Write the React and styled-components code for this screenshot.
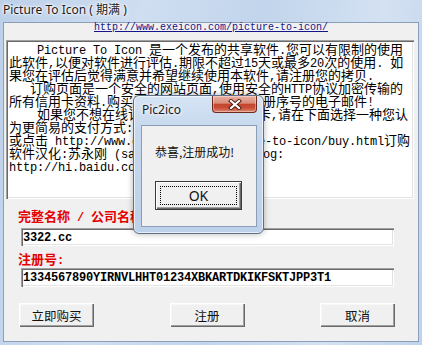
import React from "react";
import styled, { createGlobalStyle } from "styled-components";

const GlobalStyle = createGlobalStyle`
  *, *::before, *::after { box-sizing: border-box; }
  html, body {
    margin: 0;
    padding: 0;
    width: 422px;
    height: 345px;
    overflow: hidden;
  }
  body {
    background: #c4d6ec;
    font-family: "Noto Sans CJK SC", sans-serif;
  }
`;

const Window = styled.div`
  position: relative;
  width: 422px;
  height: 345px;
  display: flex;
  flex-direction: column;
  background: linear-gradient(
    100deg,
    #bcd0e9 0%,
    #cfdef1 30%,
    #c2d5ec 55%,
    #d3e1f2 80%,
    #c0d3ea 100%
  );
`;

const TitleBar = styled.div`
  height: 22px;
  padding: 2px 0 0 3px;
  font-family: "Noto Sans", "Noto Sans CJK SC", sans-serif;
  font-size: 12px;
  line-height: 16px;
  color: #1a1a1a;
  text-shadow: 0 0 5px #fff, 0 0 3px #fff, 0 0 2px #fff;
  white-space: pre;
`;

const Client = styled.div`
  height: 320px;
  margin: 0 3px;
  background: #f0f0f0;
  border: 1px solid #8c9fb8;
  display: flex;
  flex-direction: column;
`;

const UrlRow = styled.div`
  height: 17px;
  text-align: center;
  font-family: "Liberation Mono", monospace;
  font-size: 10px;
  line-height: 10px;
  color: #15158a;
  text-decoration: underline;
  white-space: pre;
`;

const sunken = `
  background: #fff;
  box-shadow: inset 1px 1px #a0a0a0, inset 2px 2px #696969,
    inset -1px -1px #ffffff, inset -2px -2px #e3e3e3;
`;

const TextBox = styled.div`
  ${sunken}
  margin-left: 2px;
  width: 408px;
  height: 159px;
  padding: 2px 0 0 3px;
  overflow: hidden;
  font-family: "Noto Sans CJK SC", sans-serif;
  font-size: 13px;
  color: #000;
`;

const Line = styled.div`
  height: 13px;
  line-height: 13px;
  white-space: pre;
`;

const LatinRun = styled.span`
  font-family: "Liberation Mono", monospace;
  font-size: 12px;
  letter-spacing: -0.2px;
`;

const BoldLatinRun = styled(LatinRun)`
  font-weight: bold;
`;

const Label = styled.div`
  margin-top: ${(p) => p.$top}px;
  padding-left: 14px;
  height: 15px;
  line-height: 15px;
  font-size: 13px;
  font-weight: bold;
  color: #e60000;
  white-space: pre;
`;

const Field = styled.div`
  ${sunken}
  margin-top: ${(p) => p.$top}px;
  margin-left: 17px;
  width: 373px;
  height: ${(p) => p.$h}px;
  padding: 1px 0 0 2px;
  display: flex;
  align-items: center;
  font-family: "Liberation Mono", monospace;
  font-weight: bold;
  font-size: 12px;
  letter-spacing: -0.2px;
  color: #000;
  white-space: pre;
`;

const ButtonRow = styled.div`
  margin-top: 16px;
  padding: 0 23px 0 15px;
  display: flex;
  justify-content: space-between;
`;

const ActionButton = styled.button`
  width: 75px;
  height: 24px;
  padding: 0;
  border: none;
  background: #f0f0f0;
  box-shadow: inset 1px 1px #fff, inset -1px -1px #696969,
    inset -2px -2px #a0a0a0, inset 2px 2px #f7f7f7;
  font-family: "Noto Sans CJK SC", sans-serif;
  font-size: 12.5px;
  color: #111;
`;

/* message box */

const Dialog = styled.div`
  position: absolute;
  left: 133px;
  top: 95px;
  width: 131px;
  height: 139px;
  border: 1px solid #5d6f88;
  border-radius: 6px;
  background: linear-gradient(180deg, #d6e4f4 0%, #c6d8ee 25%, #bcd1ea 100%);
  box-shadow: inset 0 0 0 1px rgba(255, 255, 255, 0.65),
    0 0 6px rgba(0, 0, 0, 0.3);
  display: flex;
  flex-direction: column;
`;

const DialogTitle = styled.div`
  height: 29px;
  padding: 6px 0 0 8px;
  font-family: "Noto Sans", sans-serif;
  font-size: 12px;
  line-height: 16px;
  color: #1a1a1a;
  text-shadow: 0 0 5px #fff, 0 0 3px #fff;
`;

const CloseButton = styled.div`
  position: absolute;
  top: 0;
  left: 78px;
  width: 45px;
  height: 17px;
  border: 1px solid #6e2a20;
  border-top: none;
  border-radius: 0 0 4px 4px;
  background: linear-gradient(
    180deg,
    #eab3a5 0%,
    #d98a77 45%,
    #c3452f 52%,
    #c84f38 75%,
    #e08a70 100%
  );
  box-shadow: inset 0 0 0 1px rgba(255, 255, 255, 0.35);
  display: flex;
  align-items: center;
  justify-content: center;
`;

const DialogClient = styled.div`
  height: 102px;
  margin: 0 6px 0 7px;
  background: #f0f0f0;
  border: 1px solid #8d9db3;
  padding-left: 13px;
`;

const Message = styled.div`
  margin-top: 18px;
  height: 16px;
  line-height: 16px;
  font-size: 12px;
  color: #111;
`;

const DefaultButton = styled.button`
  margin-top: 21px;
  width: 87px;
  height: 29px;
  padding: 4px;
  border: 1px solid #3a3a3a;
  background: #f0f0f0;
  box-shadow: inset 1px 1px #fff, inset -1px -1px #696969,
    inset -2px -2px #a0a0a0;
  display: flex;
`;

const FocusRing = styled.span`
  flex: 1;
  border: 1px dotted #000;
  display: flex;
  align-items: center;
  justify-content: center;
  font-family: "Noto Sans", sans-serif;
  font-size: 14px;
  color: #111;
`;

function Mixed({ text, latin: Latin = LatinRun }) {
  return text
    .split(/([\x00-\x7f]+)/)
    .filter(Boolean)
    .map((part, i) =>
      /^[\x00-\x7f]/.test(part) ? (
        <Latin key={i}>{part}</Latin>
      ) : (
        <React.Fragment key={i}>{part}</React.Fragment>
      )
    );
}

const lines = [
  "    Picture To Icon 是一个发布的共享软件.您可以有限制的使用",
  "此软件,以便对软件进行评估.期限不超过15天或最多20次的使用. 如",
  "果您在评估后觉得满意并希望继续使用本软件,请注册您的拷贝.",
  "   订购页面是一个安全的网站页面,使用安全的HTTP协议加密传输的",
  "所有信用卡资料.购买后您将收到一封含有注册序号的电子邮件!",
  "    如果您不想在线订购或者不能使用信用卡,请在下面选择一种您认",
  "为更简易的支付方式:",
  "或点击 http://www.exeicon.com/picture-to-icon/buy.html订购",
  "软件汉化:苏永刚 (saygogo) 的汉化博客blog:",
  "http://hi.baidu.com/saygogo",
];

export default function App() {
  return (
    <>
      <GlobalStyle />
      <Window>
        <TitleBar>Picture To Icon ( 期满 )</TitleBar>
        <Client>
          <UrlRow>http://www.exeicon.com/picture-to-icon/</UrlRow>
          <TextBox>
            {lines.map((l, i) => (
              <Line key={i}>
                <Mixed text={l} />
              </Line>
            ))}
          </TextBox>
          <Label $top={9}>
            <Mixed text="完整名称 / 公司名称" latin={BoldLatinRun} />
          </Label>
          <Field $top={5} $h={18}>
            3322.cc
          </Field>
          <Label $top={5}>
            <Mixed text="注册号:" latin={BoldLatinRun} />
          </Label>
          <Field $top={2} $h={19}>
            1334567890YIRNVLHHT01234XBKARTDKIKFSKTJPP3T1
          </Field>
          <ButtonRow>
            <ActionButton>立即购买</ActionButton>
            <ActionButton>注册</ActionButton>
            <ActionButton>取消</ActionButton>
          </ButtonRow>
        </Client>

        <Dialog>
          <DialogTitle>Pic2ico</DialogTitle>
          <CloseButton>
            <svg width="14" height="11" viewBox="0 0 14 11">
              <path
                d="M3 2 L11 9 M11 2 L3 9"
                stroke="#4a1a12"
                strokeWidth="4"
                strokeLinecap="square"
              />
              <path
                d="M3 2 L11 9 M11 2 L3 9"
                stroke="#fff"
                strokeWidth="2.2"
                strokeLinecap="square"
              />
            </svg>
          </CloseButton>
          <DialogClient>
            <Message>恭喜,注册成功!</Message>
            <DefaultButton>
              <FocusRing>OK</FocusRing>
            </DefaultButton>
          </DialogClient>
        </Dialog>
      </Window>
    </>
  );
}
